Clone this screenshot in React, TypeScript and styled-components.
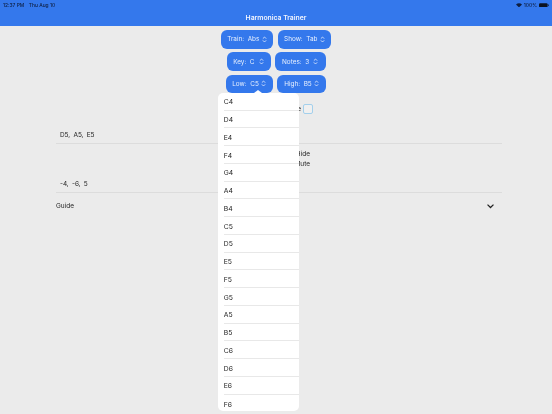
import React from "react";
import styled, { createGlobalStyle } from "styled-components";

const Global = createGlobalStyle`
  html, body { margin: 0; padding: 0; background: #ebebeb; }
  body { font-family: Inter, "Liberation Sans", sans-serif; color: #222; overflow: hidden; }
`;
const Page = styled.div`
  width: 552px;
  height: 414px;
  overflow: hidden;
  display: flex;
  flex-direction: column;
  background: #ebebeb;
  filter: blur(0.25px);
`;
const Header = styled.header`
  height: 26px;
  flex: none;
  background: #3478ec;
  color: #fff;
  display: flex;
  flex-direction: column;
`;
const StatusBar = styled.div`
  height: 10px;
  padding: 0 3px;
  display: flex;
  align-items: center;
  justify-content: space-between;
  font-size: 4.9px;
  font-weight: 500;
  color: #0f1f40;
`;
const StatusLeft = styled.div`
  display: flex;
  gap: 4.5px;
`;
const StatusRight = styled.div`
  display: flex;
  align-items: center;
  gap: 2px;
`;
const Title = styled.div`
  text-align: center;
  font-size: 6.8px;
  font-weight: 600;
  line-height: 12px;
  margin-top: 1.5px;
  color: #f3f6fe;
`;
const Controls = styled.div`
  display: flex;
  flex-direction: column;
  padding-top: 4px;
  gap: 3.6px;
`;
const ControlRow = styled.div`
  display: flex;
  justify-content: center;
  gap: 4.5px;
`;
const SelectWrap = styled.div`
  position: relative;
  display: flex;
`;
const SelectButton = styled.button<{ $w: number }>`
  width: ${(p) => p.$w}px;
  height: 18.7px;
  padding: 0;
  border: 0;
  border-radius: 6px;
  background: #3478ec;
  color: #e6effe;
  font: 400 6.4px Inter, "Liberation Sans", sans-serif;
  display: flex;
  align-items: center;
  justify-content: center;
  gap: 2.5px;
  white-space: pre;
`;
const Popover = styled.div`
  position: absolute;
  left: -8px;
  top: 18.3px;
  width: 81px;
  height: 318px;
  background: #fff;
  border-radius: 5px;
  z-index: 5;
  display: flex;
  flex-direction: column;
  overflow: hidden;
`;
const Arrow = styled.div`
  position: absolute;
  left: 28px;
  top: 15px;
  width: 0;
  height: 0;
  border-left: 4px solid transparent;
  border-right: 4px solid transparent;
  border-bottom: 3.5px solid #fff;
  z-index: 6;
`;
const Option = styled.div`
  height: 17.75px;
  flex: none;
  margin-left: 6px;
  padding-top: 1.5px;
  box-sizing: border-box;
  display: flex;
  align-items: center;
  font-size: 6.8px;
  color: #222;
  border-bottom: 0.6px solid #e8e8e8;
  &:last-child { border-bottom: 0; }
`;
const CheckRow = styled.div`
  width: 74px;
  margin: 11px auto 0;
  display: flex;
  justify-content: flex-end;
  align-items: center;
  gap: 2px;
  height: 10px;
  font-size: 6.5px;
  white-space: nowrap;
`;
const CheckBox = styled.span`
  flex: none;
  width: 8px;
  height: 8px;
  border: 1px solid #a3d0ec;
  border-radius: 2px;
  background: #f0f0f0;
`;
const Content = styled.div`
  margin: 0 50px 0 56px;
  display: flex;
  flex-direction: column;
  font-size: 6.5px;
`;
const ValueRow = styled.div<{ $top: number }>`
  margin-top: ${(p) => p.$top}px;
  height: 18px;
  padding: 1px 0 0 4px;
  box-sizing: border-box;
  display: flex;
  align-items: center;
  white-space: pre;
  letter-spacing: -0.1px;
  border-bottom: 0.7px solid #dcdcdc;
`;
const Toggles = styled.div`
  height: 31.5px;
  padding-top: 6.5px;
  box-sizing: border-box;
  display: flex;
  flex-direction: column;
  align-items: flex-end;
  width: 254px;
  line-height: 9.5px;
`;
const GuideRow = styled.div`
  height: 26px;
  display: flex;
  align-items: center;
  justify-content: space-between;
  padding-right: 8.5px;
`;

const Updown = () => (
  <svg width="5" height="7" viewBox="0 0 6 8" fill="none" stroke="#e4edfd" strokeWidth="1">
    <path d="M1 3 L3 1 L5 3 M1 5 L3 7 L5 5" />
  </svg>
);
const Wifi = () => (
  <svg width="6" height="4.5" viewBox="0 0 14 10" fill="#0f1f40">
    <path d="M7 10 L0 3 Q7 -2 14 3 Z" />
  </svg>
);
const Battery = () => (
  <svg width="10" height="4.5" viewBox="0 0 22 10">
    <rect x="0" y="0.5" width="19" height="9" rx="2.5" fill="#0b1220" />
    <rect x="20" y="3" width="1.5" height="4" rx="0.7" fill="#0b1220" />
  </svg>
);
const Chevron = () => (
  <svg width="7" height="4.5" viewBox="0 0 8 5" fill="none" stroke="#222" strokeWidth="1.4">
    <path d="M0.6 0.7 L4 4 L7.4 0.7" />
  </svg>
);

const notes = ["C4","D4","E4","F4","G4","A4","B4","C5","D5","E5","F5","G5","A5","B5","C6","D6","E6","F6"];

const Select = ({ w, label, value }: { w: number; label: string; value: string }) => (
  <SelectButton $w={w}>
    <span>{label}:  {value}</span>
    <Updown />
  </SelectButton>
);

export default function App() {
  return (
    <Page>
      <Global />
      <Header>
        <StatusBar>
          <StatusLeft>
            <span>12:37 PM</span>
            <span>Thu Aug 10</span>
          </StatusLeft>
          <StatusRight>
            <Wifi />
            <span>100%</span>
            <Battery />
          </StatusRight>
        </StatusBar>
        <Title>Harmonica Trainer</Title>
      </Header>
      <Controls>
        <ControlRow>
          <Select w={52.5} label="Train" value="Abs" />
          <Select w={53.5} label="Show" value="Tab" />
        </ControlRow>
        <ControlRow>
          <Select w={44} label="Key" value="C " />
          <Select w={50.5} label="Notes" value="3 " />
        </ControlRow>
        <ControlRow>
          <SelectWrap>
            <Select w={47} label="Low" value="C5" />
            <Arrow />
            <Popover>
              {notes.map((n) => (
                <Option key={n}>{n}</Option>
              ))}
            </Popover>
          </SelectWrap>
          <Select w={49} label="High" value="B5" />
        </ControlRow>
      </Controls>
      <CheckRow>
        <span>Show Note</span>
        <CheckBox />
      </CheckRow>
      <Content>
        <ValueRow $top={11.5}>D5,  A5,  E5</ValueRow>
        <Toggles>
          <span>Hide</span>
          <span>Mute</span>
        </Toggles>
        <ValueRow $top={0}>-4,  -6,  5</ValueRow>
        <GuideRow>
          <span>Guide</span>
          <Chevron />
        </GuideRow>
      </Content>
    </Page>
  );
}
